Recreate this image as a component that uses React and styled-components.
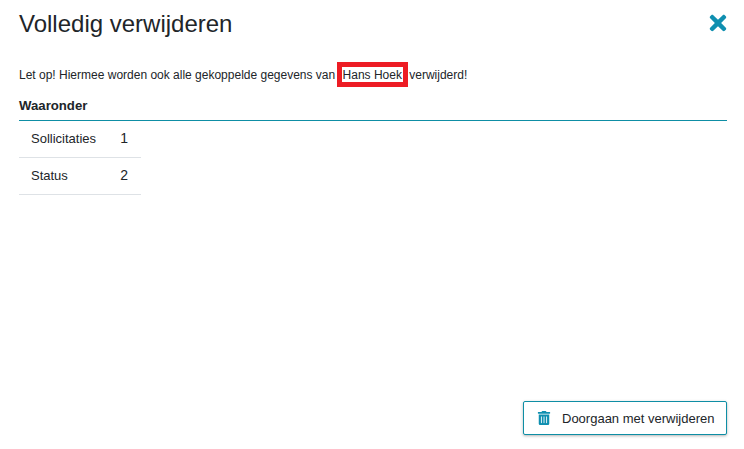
import React from 'react';
import styled, { createGlobalStyle } from 'styled-components';
import { FaTimes, FaTrashAlt } from 'react-icons/fa';

const GlobalStyle = createGlobalStyle`
  html, body {
    margin: 0;
    padding: 0;
    background: #fff;
  }
  body {
    font-family: "Liberation Sans", Arial, sans-serif;
    color: #212529;
  }
`;

const App = () => {
  return (
    <Modal>
      <GlobalStyle />
      <Header>
        <Title>Volledig verwijderen</Title>
        <CloseButton aria-label="Sluiten">
          <FaTimes />
        </CloseButton>
      </Header>
      <Body>
        <Warning>
          Let op! Hiermee worden ook alle gekoppelde gegevens van{' '}
          <Name>Hans Hoek</Name> verwijderd!
        </Warning>
        <SectionTitle>Waaronder</SectionTitle>
        <Table>
          <tbody>
            <tr>
              <Label>Sollicitaties</Label>
              <Count>1</Count>
            </tr>
            <tr>
              <Label>Status</Label>
              <Count>2</Count>
            </tr>
          </tbody>
        </Table>
      </Body>
      <Footer>
        <ActionButton>
          <FaTrashAlt />
          Doorgaan met verwijderen
        </ActionButton>
      </Footer>
    </Modal>
  );
};

const Modal = styled.div`
  box-sizing: border-box;
  height: 449px;
  padding: 0 17px 0 19px;
  display: flex;
  flex-direction: column;
`;

const Header = styled.header`
  display: flex;
  justify-content: space-between;
  align-items: center;
  height: 48px;
`;

const Title = styled.h1`
  margin: 0;
  font-size: 24px;
  font-weight: 400;
  line-height: 48px;
`;

const CloseButton = styled.button`
  display: flex;
  padding: 0;
  border: 0;
  background: none;
  color: #0f8fb0;
  font-size: 24px;
  transform: translate(3px, -1px);
`;

const Body = styled.main`
  flex: 1;
  padding-top: 18px;
`;

const Warning = styled.p`
  margin: 0;
  font-size: 12px;
  line-height: 18px;
`;

const Name = styled.span`
  position: relative;
  margin: 0 4px 0 4px;

  &::after {
    content: '';
    position: absolute;
    left: -6px;
    right: -6px;
    top: -6px;
    bottom: -5px;
    border: 5px solid #ed1c24;
  }
`;

const SectionTitle = styled.h2`
  margin: 13px 0 0;
  padding-bottom: 5px;
  border-bottom: 1px solid #0e8ea5;
  font-size: 13.2px;
  font-weight: 700;
  line-height: 18px;
`;

const Table = styled.table`
  border-collapse: separate;
  border-spacing: 0;
  width: 122px;

  td {
    box-sizing: border-box;
    height: 37px;
    border-bottom: 1px solid #dee2e6;
  }
`;

const Label = styled.td`
  padding: 0 0 2px 12px;
  font-size: 13px;
`;

const Count = styled.td`
  padding: 0 13px 2px 0;
  font-size: 14px;
  text-align: right;
`;

const Footer = styled.footer`
  display: flex;
  justify-content: flex-end;
  padding-bottom: 14px;
`;

const ActionButton = styled.button`
  display: flex;
  align-items: center;
  gap: 11px;
  box-sizing: border-box;
  height: 34px;
  width: 204px;
  padding: 0 0 0 13px;
  border: 1px solid #0e8ea5;
  border-radius: 2px;
  background: #fff;
  box-shadow: 0 1px 3px rgba(0, 0, 0, 0.3);
  color: #212529;
  font-family: "Liberation Sans", Arial, sans-serif;
  font-size: 13px;

  svg {
    color: #0f8fb0;
    font-size: 14px;
  }
`;

export default App;
